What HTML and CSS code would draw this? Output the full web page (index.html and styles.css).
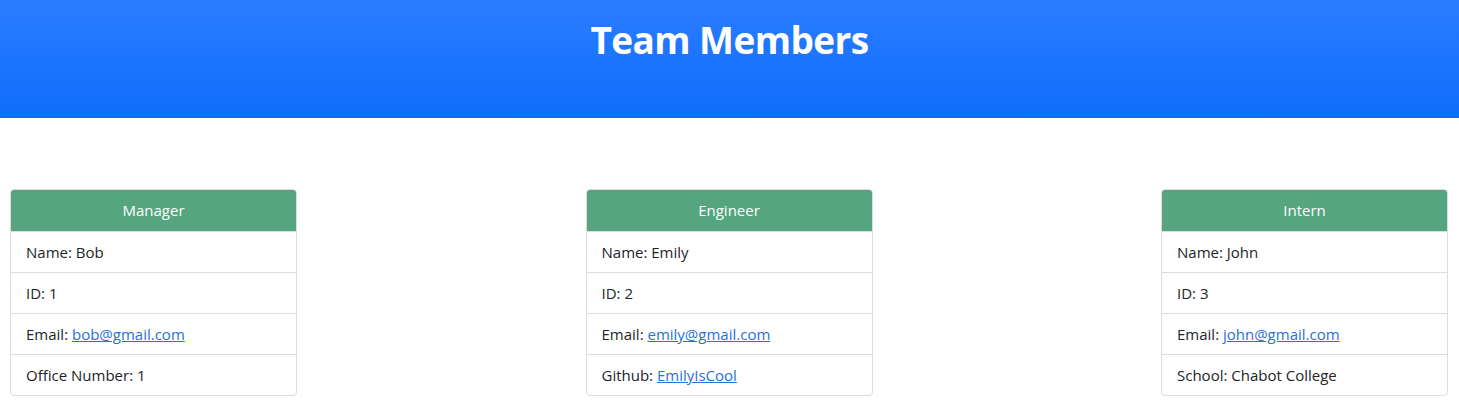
FILE: index.html
```html
<!DOCTYPE html>
<html lang="en">
<head>
<meta charset="utf-8">
<title>Team Members</title>
<link rel="stylesheet" href="styles.css">
</head>
<body>
<header class="banner">
  <h1 class="banner-title">Team Members</h1>
</header>
<main class="team">
  <section class="card">
    <div class="card-header">Manager</div>
    <ul class="list">
      <li class="item">Name: Bob</li>
      <li class="item">ID: 1</li>
      <li class="item">Email: <a href="#" class="link">bob@gmail.com</a></li>
      <li class="item">Office Number: 1</li>
    </ul>
  </section>
  <section class="card">
    <div class="card-header">Engineer</div>
    <ul class="list">
      <li class="item">Name: Emily</li>
      <li class="item">ID: 2</li>
      <li class="item">Email: <a href="#" class="link">emily@gmail.com</a></li>
      <li class="item">Github: <a href="#" class="link">EmilyIsCool</a></li>
    </ul>
  </section>
  <section class="card">
    <div class="card-header">Intern</div>
    <ul class="list">
      <li class="item">Name: John</li>
      <li class="item">ID: 3</li>
      <li class="item">Email: <a href="#" class="link">john@gmail.com</a></li>
      <li class="item">School: Chabot College</li>
    </ul>
  </section>
</main>
</body>
</html>
```

FILE: styles.css
```css
* { box-sizing: border-box; }
body {
  margin: 0;
  font-family: "Open Sans", "Noto Sans", sans-serif;
  font-size: 15px;
  color: #212529;
  background: #fff;
}
.banner {
  height: 118px;
  background: linear-gradient(to bottom, #2a7dff, #0f6dfd);
  display: flex;
  justify-content: center;
  padding-top: 17px;
}
.banner-title {
  margin: 0;
  color: #fff;
  font-size: 37px;
  font-weight: 700;
  line-height: 46px;
  letter-spacing: -0.6px;
}
.team {
  display: flex;
  justify-content: space-between;
  padding: 71px 11px 0 10px;
}
.card {
  width: 287px;
  border: 1px solid #dcdcdc;
  border-radius: 4px;
  overflow: hidden;
}
.card-header {
  background: #54a580;
  color: #fff;
  text-align: center;
  height: 41px;
  line-height: 40px;
}
.list {
  list-style: none;
  margin: 0;
  padding: 0;
}
.item {
  height: 41px;
  line-height: 40px;
  padding: 0 15px;
  border-top: 1px solid #dcdcdc;
}
.link {
  color: #2a6fdb;
  text-decoration: underline;
}
```
